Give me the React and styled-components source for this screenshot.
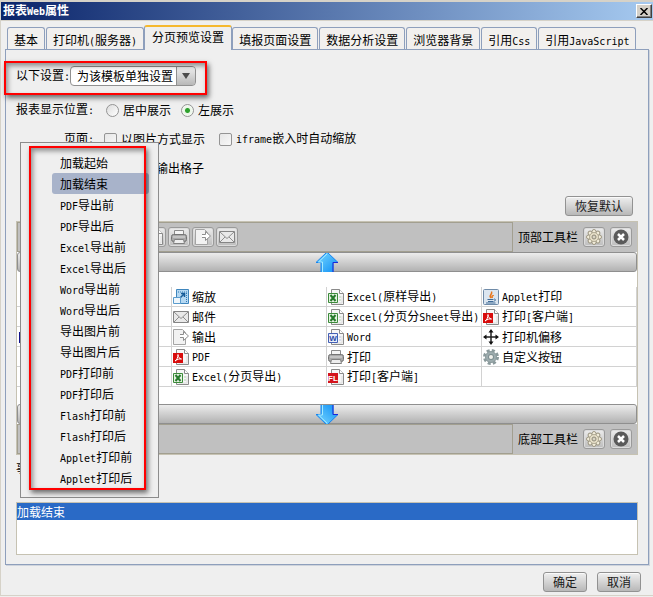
import React, { useState } from 'react';
import styled, { createGlobalStyle, css } from 'styled-components';

const GlobalStyle = createGlobalStyle`
  * {
    box-sizing: border-box;
  }
  body {
    margin: 0;
    background: #efefef;
    color: #000;
    font: 12px/20px 'Noto Sans CJK SC', 'Noto Sans', sans-serif;
  }
  button, select, input {
    font: inherit;
    color: inherit;
    margin: 0;
  }
`

const Half = styled.span`
  font-family: 'DejaVu Sans Mono', 'Liberation Mono', monospace;
  font-size: 10px;
`

// latin characters are half as wide as the chinese ones
const Mixed = ({ children }) => (
  <span>
    {children.split(/([\x20-\x7e]+)/).map((part, i) => (
      i % 2 ? <Half key={i}>{part}</Half> : part
    ))}
  </span>
)

const Dialog = styled.div`
  position: relative;
  border: 1px solid #d6d2c8;
  border-width: 1px 0 1px 1px;
  background: #efefef;
`
const TitleBar = styled.header`
  display: flex;
  align-items: center;
  justify-content: space-between;
  height: 20px;
  padding: 0 1px 0 2px;
  border: solid #d6d2c8;
  border-width: 1px 0;
  background: linear-gradient(to right, #0a246a, #a6caf0);
  color: white;
`
const Title = styled.h1`
  margin: 0;
  font-size: 12px;
  line-height: 18px;
  font-weight: 700;
`
const CloseButton = styled.button`
  display: flex;
  align-items: center;
  justify-content: center;
  width: 16px;
  height: 14px;
  padding: 0;
  border: 1px solid;
  border-color: #fff #404040 #404040 #fff;
  box-shadow: inset -1px -1px #808080;
  background: #d4d0c8;
  color: #000;
`

const Tabs = styled.nav`
  display: flex;
  align-items: flex-end;
  gap: 1px;
  height: 24px;
  margin: 4px 0 0 6px;
`
const Tab = styled.button`
  flex: none;
  height: 22px;
  padding: 3px 6px 0;
  border: 1px solid #8e9fbc;
  border-bottom: 0;
  border-radius: 3px 3px 0 0;
  background: #f2f0ee;
  line-height: 18px;
  white-space: nowrap;
  ${p => p.$active && css`
    position: relative;
    height: 25px;
    margin: 0 -1px;
    padding: 0 7px 3px;
    border-top: 2px solid #f5b82e;
    background: #efefef;
    align-self: flex-start;
  `}
`
const Panel = styled.main`
  margin: 0 4px;
  padding: 16px 10px 9px;
  border: 1px solid #8e9fbc;
  box-shadow: 1px 1px #cfd4dc;
`

const Row = styled.div`
  display: flex;
  align-items: center;
  height: 20px;
  margin-bottom: ${p => p.$after || 9}px;
  white-space: nowrap;
`
const RowLabel = styled.span`
  width: 78px;
  margin-right: 10px;
  text-align: right;
`
const Option = styled.label`
  display: flex;
  align-items: center;
  gap: 4px;
  margin-right: ${p => p.$after || 14}px;
`
const Radio = styled.input`
  appearance: none;
  width: 13px;
  height: 13px;
  margin-left: 2px;
  border: 1px solid #949494;
  border-radius: 50%;
  background: linear-gradient(135deg, #dcdcdc, #fff);
  &:checked {
    background: radial-gradient(circle, #2ea12e 0 2px, #e9f5e6 3px, #fff);
  }
`
const Check = styled.input`
  appearance: none;
  width: 13px;
  height: 13px;
  border: 1px solid #949494;
  border-radius: 2px;
  background: linear-gradient(135deg, #e6e6e6, #f8f8f8);
  &:checked {
    background: #2ea12e;
  }
`
const Continued = styled.span`
  padding-left: 52px;
`

const SelectBox = styled.span`
  display: flex;
  height: 20px;
  border: 1px solid #909090;
  border-radius: 4px;
  background: linear-gradient(to right, white 105px, #c8c8c8 105px);
  overflow: hidden;
`
const Select = styled.select`
  appearance: none;
  width: 105px;
  padding: 0 0 0 6px;
  border: 0;
  outline: 0;
  background: transparent;
  line-height: 18px;
`
const SelectArrow = styled.span`
  display: flex;
  align-items: center;
  justify-content: center;
  width: 19px;
  border-left: 1px solid #909090;
  background: linear-gradient(#efefef, #b8b8b8);
  pointer-events: none;
`

const Button = styled.button`
  height: 20px;
  padding: 0 9px;
  border: 1px solid #929292;
  border-radius: 3px;
  background: linear-gradient(#efefef, #b8b8b8);
  box-shadow: inset 0 1px #fafafa;
  color: #1a1a1a;
  line-height: 18px;
`
const Restore = styled.div`
  display: flex;
  justify-content: flex-end;
  margin: 18px 5px 5px 0;
`

const Designer = styled.section`
  border: 1px solid #c6c2b2;
  background: white;
`
const ToolStrip = styled.div`
  display: flex;
  align-items: center;
  height: 30px;
  background: #c0c0c0;
`
const Tools = styled.div`
  display: flex;
  flex: 1;
  align-items: center;
  align-self: stretch;
  gap: 2px;
  padding-left: 6px;
  border: 1px solid #a29f90;
`
const StripActions = styled.div`
  display: flex;
  align-items: center;
  gap: 5px;
  padding: 0 5px;
`
const IconButton = styled.button`
  display: flex;
  flex: none;
  align-items: center;
  justify-content: center;
  width: 22px;
  height: 20px;
  padding: 0;
  border: 1px solid #9a9a9a;
  border-radius: 3px;
  background: linear-gradient(#ececec, #bcbcbc);
  box-shadow: inset 0 0 0 1px #dcdcdc;
`
const ArrowBar = styled.button`
  display: flex;
  align-items: center;
  justify-content: center;
  width: 100%;
  height: 20px;
  padding: 0;
  border: 1px solid #8f8f8f;
  border-radius: 3px;
  background: linear-gradient(#ececec, #b2b2b2);
`
const ToolTable = styled.table`
  width: 100%;
  margin: 15px 0 17px;
  border-collapse: separate;
  border-spacing: 0;
  table-layout: fixed;
`
const Cell = styled.td`
  height: 20px;
  padding: 0 0 0 1px;
  border-right: 1px solid #d2d2d2;
  border-bottom: 1px solid #d2d2d2;
  line-height: 19px;
  white-space: nowrap;
`
const CellBody = styled.span`
  display: flex;
  align-items: center;
  gap: 3px;
  height: 19px;
  svg {
    flex: none;
  }
`

const EventLabel = styled.div`
  height: 20px;
  margin: 3px 0 24px;
`
const EventList = styled.ul`
  height: 53px;
  margin: 0;
  padding: 0;
  border: 1px solid #c6c2b2;
  background: white;
  list-style: none;
`
const EventItem = styled.li`
  height: 17px;
  background: #2a6ac6;
  color: white;
  line-height: 17px;
`
const Footer = styled.footer`
  display: flex;
  justify-content: flex-end;
  gap: 10px;
  padding: 7px 12px 3px;
`

const Menu = styled.div`
  position: absolute;
  top: 141px;
  left: 19px;
  width: 139px;
  padding: 9px 9px 9px 31px;
  border: 1px solid #8c8c8c;
  background: #efefef;
`
const MenuItem = styled.button`
  display: block;
  width: 97px;
  height: 21px;
  padding: 0 0 0 8px;
  border: 0;
  border-radius: 3px;
  background: ${p => p.$active ? '#a8b3ca' : 'transparent'};
  line-height: 21px;
  text-align: left;
  white-space: nowrap;
`
const Marker = styled.div`
  position: absolute;
  border: 2px solid #f00;
  box-shadow: 2px 3px 5px rgba(0, 0, 0, .55), inset 2px 3px 5px rgba(0, 0, 0, .4);
  pointer-events: none;
`
const SettingMarker = styled(Marker)`
  top: 60px;
  left: 3px;
  width: 203px;
  height: 34px;
`
const MenuMarker = styled(Marker)`
  inset: 3px 12px 7px 8px;
`

const Svg = ({ w = 16, h = 16, children }) => (
  <svg width={w} height={h} viewBox={`0 0 ${w} ${h}`} fill="none" aria-hidden="true">{children}</svg>
)

const Sheet = () => (
  <>
    <path d="M3.500 .5h8l4 4v11h-12z" fill="#f6f6f6" stroke="#8a8a8a" />
    <path d="M11.500 .5v4h4" fill="#fff" stroke="#8a8a8a" />
    <path d="M6 14h8V7" stroke="#dcdcdc" />
  </>
)
const PageIcon = () => <Svg><Sheet /></Svg>
const PdfIcon = () => (
  <Svg>
    <Sheet />
    <path d="M0 4h10v10H0z" fill="#d80b0b" />
    <path d="M2 12c2-1 3-4 3-6.500 0 3 1.500 4 3.500 4.500-2-.3-4 .1-6.500 2z" stroke="#fff" />
  </Svg>
)
const ExcelIcon = () => (
  <Svg>
    <Sheet />
    <path d="M.5 4.500h9v9h-9z" fill="#e5f2e1" stroke="#3c8b3a" />
    <path d="M2.500 6l5 6M7.500 6l-5 6" stroke="#267a2b" strokeWidth="2" />
    <path d="M11 8h2M11 11h2" stroke="#b4d2b0" />
  </Svg>
)

const IconText = styled.text`
  font: 700 8px 'Liberation Sans', sans-serif;
  text-anchor: middle;
`
const WordIcon = () => (
  <Svg>
    <Sheet />
    <path d="M.5 4.500h9v9h-9z" fill="#e8edf9" stroke="#4460b4" />
    <IconText x="5" y="12" fill="#2c4aa6">W</IconText>
    <path d="M11 8h2M11 11h2" stroke="#b5bfe0" />
  </Svg>
)
const FlashIcon = () => (
  <Svg>
    <Sheet />
    <path d="M0 4h10v10H0z" fill="#d4141c" />
    <IconText x="5" y="12" fill="#fff">FL</IconText>
  </Svg>
)
const ZoomIcon = () => (
  <Svg>
    <path d="M3.500 .5h12v14h-12z" fill="#b5d8f2" stroke="#3f86bd" />
    <path d="M5 3h9M13.500 4v9" stroke="#2f78b5" strokeDasharray="1 1" />
    <path d="M7 9l4-4M8 4.500h3.500V8" stroke="#175c99" strokeWidth="1.500" />
    <path d="M.5 8.500h7v6h-7z" fill="#eef6fc" stroke="#5b9ccd" />
  </Svg>
)
const MailIcon = () => (
  <Svg>
    <path d="M.5 2.500h15v11H.5z" fill="#e9e9e9" stroke="#858585" />
    <path d="M1 3l7 6.500L15 3M1 13l5-5M15 13l-5-5" stroke="#8e8e8e" />
  </Svg>
)
const ExportIcon = () => (
  <Svg>
    <path d="M.5 .5h9l3 3v12H.5z" fill="#f2f2f2" stroke="#a4a4a4" />
    <path d="M7 5.500h3.500v-3l5 4.500-5 4.500v-3H7" fill="#fff" stroke="#8d8d8d" />
  </Svg>
)
const PrintIcon = () => (
  <Svg>
    <path d="M3.500 6V1.500h9V6" fill="#f4f4f4" stroke="#8a8a8a" />
    <rect x=".5" y="5.500" width="15" height="7" rx="2" fill="#a8a8a8" stroke="#747474" />
    <path d="M2 8h12" stroke="#dedede" />
    <path d="M3.500 10.500h9l1 4h-11z" fill="#eee" stroke="#808080" />
  </Svg>
)
const AppletIcon = () => (
  <Svg>
    <rect x=".5" y=".5" width="15" height="15" rx="1" fill="#dce6f0" stroke="#6f8ba8" />
    <path d="M8 9c-3-2.500 2-3.500 .5-6.500M9.500 9c-1.500-2 .5-2 1-3" stroke="#e8761b" strokeWidth="1.500" />
    <path d="M4.500 10.500h6M5 12.500h5.500M3 14h9.500M11 10c2 0 2 2 0 2" stroke="#3e6a96" />
  </Svg>
)
const MoveIcon = () => (
  <Svg>
    <path d="M8 2v12M2 8h12" stroke="#222" strokeWidth="1.500" />
    <path d="M8 0l2.500 3.500h-5zM8 16l2.500-3.500h-5zM0 8l3.500-2.500v5zM16 8l-3.500-2.500v5z" fill="#111" />
  </Svg>
)
const GearIcon = () => (
  <Svg>
    <circle cx="8" cy="8" r="6.500" stroke="#8b9a9c" strokeWidth="3" strokeDasharray="3 2.105" />
    <circle cx="8" cy="8" r="5.500" fill="#9dacae" stroke="#8b9a9c" />
    <circle cx="8" cy="8" r="3" fill="#7f8f92" />
    <circle cx="8" cy="8" r="2" fill="#f1f1ec" />
  </Svg>
)
const FlowerIcon = () => (
  <Svg>
    {[0, 45, 90, 135, 180, 225, 270, 315].map(angle => (
      <circle key={angle} cx="8" cy="2.500" r="2" fill="#f3eedc" stroke="#9c9682" transform={`rotate(${angle} 8 8)`} />
    ))}
    <circle cx="8" cy="8" r="4.500" fill="#e6dfc8" stroke="#b3ac95" />
    <circle cx="8" cy="8" r="2" fill="#d9d4c4" stroke="#8f8a78" />
  </Svg>
)
const RemoveIcon = () => (
  <Svg>
    <circle cx="8" cy="8" r="7.500" fill="#5a5a5a" />
    <path d="M5 5l6 6M11 5l-6 6" stroke="#fff" strokeWidth="2.500" />
  </Svg>
)
const CursorIcon = () => (
  <Svg>
    <path d="M2 3v11" stroke="#12128a" strokeWidth="2" />
  </Svg>
)
const BlueArrow = ({ down }) => (
  <Svg w={24} h={19}>
    <defs>
      <linearGradient id={down ? 'down' : 'up'} x1="0" x2="1" y1="0" y2="1">
        <stop offset="0" stopColor="#7fdcff" />
        <stop offset="1" stopColor="#0a8cf5" />
      </linearGradient>
    </defs>
    <g transform={down ? 'matrix(1 0 0 -1 0 19)' : undefined}>
      <path d="M12 -1L23 9.500H18V20H6V9.500H1z" fill={`url(#${down ? 'down' : 'up'})`} stroke="#1683f0" />
      <path d="M12 1L3.500 9H7.500V19" stroke="#a5eaff" />
      <path d="M18 20V9.500H23" stroke="#1a28d8" />
    </g>
  </Svg>
)

const tabs = ['基本', '打印机(服务器)', '分页预览设置', '填报页面设置', '数据分析设置', '浏览器背景', '引用Css', '引用JavaScript']

const events = [
  '加载起始', '加载结束', 'PDF导出前', 'PDF导出后', 'Excel导出前', 'Excel导出后', 'Word导出前', 'Word导出后',
  '导出图片前', '导出图片后', 'PDF打印前', 'PDF打印后', 'Flash打印前', 'Flash打印后', 'Applet打印前', 'Applet打印后',
]

const tools = [
  [null, [ZoomIcon, '缩放'], [ExcelIcon, 'Excel(原样导出)'], [AppletIcon, 'Applet打印']],
  [null, [MailIcon, '邮件'], [ExcelIcon, 'Excel(分页分Sheet导出)'], [PdfIcon, '打印[客户端]']],
  [[CursorIcon, ''], [ExportIcon, '输出'], [WordIcon, 'Word'], [MoveIcon, '打印机偏移']],
  [null, [PdfIcon, 'PDF'], [PrintIcon, '打印'], [GearIcon, '自定义按钮']],
  [null, [ExcelIcon, 'Excel(分页导出)'], [FlashIcon, '打印[客户端]'], null],
]

const topTools = [PageIcon, PageIcon, PageIcon, PageIcon, PageIcon, PageIcon, PrintIcon, ExportIcon, MailIcon]

const Strip = ({ name, items = [] }) => (
  <ToolStrip>
    <Tools>
      {items.map((Icon, i) => <IconButton key={i}><Icon /></IconButton>)}
    </Tools>
    <StripActions>
      <span>{name}</span>
      <IconButton aria-label="设置"><FlowerIcon /></IconButton>
      <IconButton aria-label="删除"><RemoveIcon /></IconButton>
    </StripActions>
  </ToolStrip>
)

export default function App() {
  const [tab, setTab] = useState('分页预览设置')
  const [event, setEvent] = useState('加载结束')

  return (
    <Dialog role="dialog" aria-labelledby="title">
      <GlobalStyle />
      <TitleBar>
        <Title id="title"><Mixed>报表Web属性</Mixed></Title>
        <CloseButton aria-label="关闭">
          <Svg w={8} h={7}><path d="M.5 0l7 7M7.500 0l-7 7" stroke="#000" strokeWidth="1.500" /></Svg>
        </CloseButton>
      </TitleBar>
      <Tabs role="tablist">
        {tabs.map(name => (
          <Tab key={name} role="tab" aria-selected={tab === name} $active={tab === name} onClick={() => setTab(name)}>
            <Mixed>{name}</Mixed>
          </Tab>
        ))}
      </Tabs>
      <Panel>
        <Row $after={14}>
          <label htmlFor="scope"><Mixed>以下设置:</Mixed></label>
          <SelectBox>
            <Select id="scope">
              <option>为该模板单独设置</option>
            </Select>
            <SelectArrow>
              <Svg w={8} h={6}><path d="M0 0h8L4 6z" fill="#4c4c4c" /></Svg>
            </SelectArrow>
          </SelectBox>
        </Row>
        <Row>
          <RowLabel><Mixed>报表显示位置:</Mixed></RowLabel>
          <Option $after={8}><Radio type="radio" name="align" />居中展示</Option>
          <Option><Radio type="radio" name="align" defaultChecked />左展示</Option>
        </Row>
        <Row>
          <RowLabel><Mixed>页面:</Mixed></RowLabel>
          <Option><Check type="checkbox" />以图片方式显示</Option>
          <Option><Check type="checkbox" /><Mixed>iframe嵌入时自动缩放</Mixed></Option>
        </Row>
        <Row>
          <RowLabel />
          <Continued>输出格子</Continued>
        </Row>
        <Restore>
          <Button>恢复默认</Button>
        </Restore>
        <Designer>
          <Strip name="顶部工具栏" items={topTools} />
          <ArrowBar aria-label="上移"><BlueArrow /></ArrowBar>
          <ToolTable>
            <tbody>
              {tools.map((row, i) => (
                <tr key={i}>
                  {row.map((tool, j) => {
                    if (!tool) return <Cell key={j} />
                    const [Icon, name] = tool
                    return (
                      <Cell key={j}>
                        <CellBody><Icon /><Mixed>{name}</Mixed></CellBody>
                      </Cell>
                    )
                  })}
                </tr>
              ))}
            </tbody>
          </ToolTable>
          <ArrowBar aria-label="下移"><BlueArrow down /></ArrowBar>
          <Strip name="底部工具栏" />
        </Designer>
        <EventLabel>事件</EventLabel>
        <EventList>
          <EventItem><Mixed>{event}</Mixed></EventItem>
        </EventList>
      </Panel>
      <Footer>
        <Button>确定</Button>
        <Button>取消</Button>
      </Footer>
      <SettingMarker />
      <Menu role="menu">
        {events.map(name => (
          <MenuItem key={name} role="menuitem" $active={event === name} onClick={() => setEvent(name)}>
            <Mixed>{name}</Mixed>
          </MenuItem>
        ))}
        <MenuMarker />
      </Menu>
    </Dialog>
  )
}
